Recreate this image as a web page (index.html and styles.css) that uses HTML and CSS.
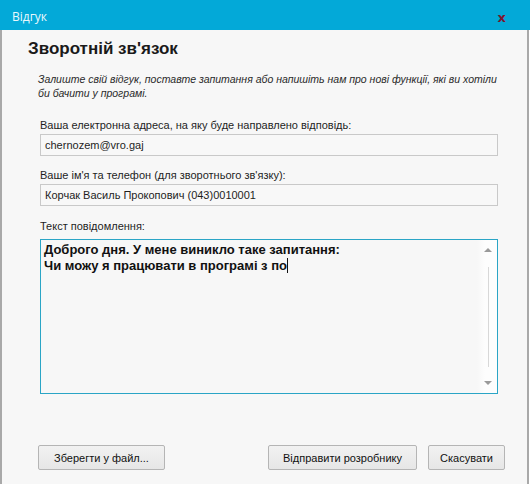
FILE: index.html
```html
<!DOCTYPE html>
<html lang="uk">
<head>
<meta charset="utf-8">
<link rel="stylesheet" href="styles.css">
</head>
<body>
<div class="window">
  <div class="titlebar">
    <span class="title">Відгук</span>
    <span class="close">x</span>
  </div>
  <div class="body">
    <h1 class="heading">Зворотній зв'язок</h1>
    <p class="intro">Залиште свій відгук, поставте запитання або напишіть нам про нові функції, які ви хотіли би бачити у програмі.</p>
    <div class="field">
      <div class="label">Ваша електронна адреса, на яку буде направлено відповідь:</div>
      <div class="input">chernozem@vro.gaj</div>
    </div>
    <div class="field">
      <div class="label">Ваше ім'я та телефон (для зворотнього зв'язку):</div>
      <div class="input">Корчак Василь Прокопович (043)0010001</div>
    </div>
    <div class="field">
      <div class="label">Текст повідомлення:</div>
      <div class="textarea">
        <div class="message">Доброго дня. У мене виникло таке запитання:<br>Чи можу я працювати в програмі з по<span class="caret"></span></div>
        <div class="scrollbar">
          <span class="arrow up"></span>
          <span class="track"></span>
          <span class="arrow down"></span>
        </div>
      </div>
    </div>
    <div class="buttons">
      <div class="btn btn-save">Зберегти у файл...</div>
      <div class="spacer"></div>
      <div class="btn btn-send">Відправити розробнику</div>
      <div class="btn btn-cancel">Скасувати</div>
    </div>
  </div>
</div>
</body>
</html>
```

FILE: styles.css
```css
html, body {
  margin: 0;
  padding: 0;
}
body {
  width: 530px;
  height: 484px;
  overflow: hidden;
  font-family: "Liberation Sans", Arial, sans-serif;
  font-size: 11px;
  color: #1e1e1e;
}
.window {
  width: 530px;
  height: 484px;
  display: flex;
  flex-direction: column;
}
.titlebar {
  height: 30px;
  background: #03a9d8;
  display: flex;
  align-items: center;
  padding: 3px 24px 0 12px;
  box-sizing: border-box;
}
.title {
  color: #eaf8fd;
  font-family: "Open Sans", "Noto Sans", sans-serif;
  font-size: 12px;
  flex: 1;
}
.close {
  color: #7b1730;
  font-family: "DejaVu Sans", sans-serif;
  font-weight: bold;
  font-size: 13px;
  line-height: 1;
  margin-top: 1px;
}
.body {
  flex: 1;
  background: #f7f7f7;
  border-left: 2px solid #a9a9a9;
  border-right: 2px solid #a9a9a9;
  margin-right: 1px;
  padding: 8px 29px 0 38px;
  display: flex;
  flex-direction: column;
}
.heading {
  margin: 0 0 0 -12px;
  font-size: 17px;
  line-height: 22px;
  font-weight: bold;
  color: #1a1a1a;
}
.intro {
  margin: 12px 0 0 -2px;
  font-style: italic;
  font-size: 10.5px;
  line-height: 14px;
  color: #2a2a2a;
}
.field {
  margin-top: 18px;
}
.label {
  line-height: 14px;
  margin-bottom: 2px;
}
.input {
  height: 22px;
  box-sizing: border-box;
  border: 1px solid #c9c9c9;
  background: #f8f8f8;
  padding: 0 4px;
  line-height: 20px;
}
.field + .field {
  margin-top: 12px;
}
.field + .field + .field {
  margin-top: 13px;
}
.textarea {
  margin-top: 6px;
  height: 155px;
  box-sizing: border-box;
  border: 1px solid #2aa5c6;
  background: #f7f7f7;
  display: flex;
}
.message {
  flex: 1;
  padding: 2px 3px;
  font-weight: bold;
  font-size: 13px;
  line-height: 16px;
  color: #111;
}
.caret {
  display: inline-block;
  width: 1px;
  height: 15px;
  background: #111;
  vertical-align: -3px;
}
.scrollbar {
  width: 20px;
  background: linear-gradient(to right, #f7f7f7, #fdfdfd 40%);
  display: flex;
  flex-direction: column;
  align-items: center;
  padding: 8px 0 8px 2px;
  box-sizing: border-box;
}
.arrow {
  width: 0;
  height: 0;
  border-left: 4px solid transparent;
  border-right: 4px solid transparent;
}
.arrow.up {
  border-bottom: 4px solid #9a9a9a;
}
.arrow.down {
  border-top: 4px solid #9a9a9a;
}
.track {
  flex: 1;
  width: 1px;
  background: #d8d8d8;
  margin: 15px 0 14px;
}
.buttons {
  margin-top: auto;
  margin-bottom: 14px;
  margin-left: -2px;
  margin-right: -7px;
  display: flex;
  gap: 11px;
}
.spacer {
  flex: 1;
}
.btn {
  height: 25px;
  box-sizing: border-box;
  border: 1px solid #b5b5b5;
  border-radius: 2px;
  background: linear-gradient(#f2f2f2, #e6e6e6);
  display: flex;
  align-items: center;
  justify-content: center;
  font-size: 11px;
  color: #111;
}
.btn-save { width: 127px; }
.btn-send { width: 149px; }
.btn-cancel { width: 77px; }
```
